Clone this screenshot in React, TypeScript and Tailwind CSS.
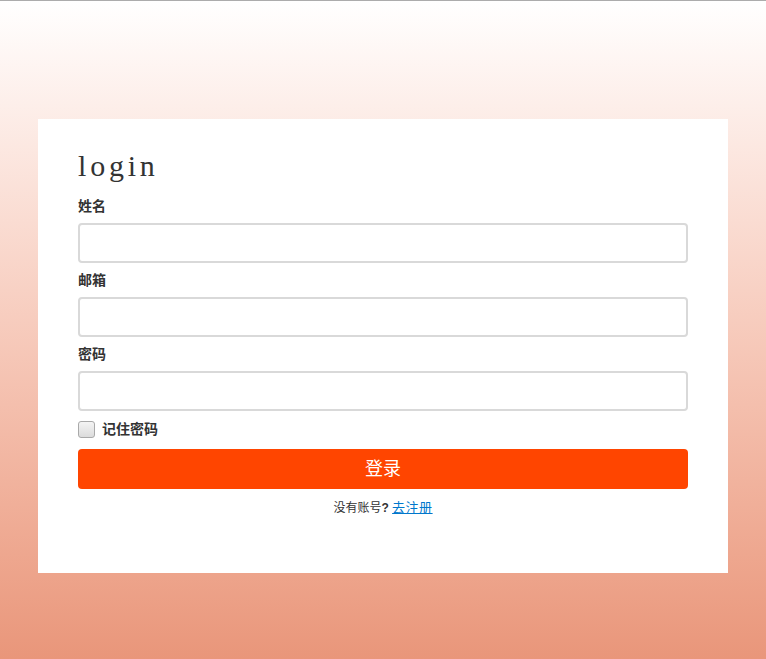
import React, { useState } from 'react';

const cjk = "font-['Liberation_Sans','Noto_Sans_CJK_SC',sans-serif]";

const Field: React.FC<{ label: string; type?: string }> = ({ label, type = 'text' }) => (
  <div>
    <label className="block h-[20px] leading-[20px] text-[14px] font-bold text-[#333] mb-[7px]">{label}</label>
    <input
      type={type}
      className="block w-full h-[40px] border-2 border-[#d9d9d9] rounded-[4px] px-2 text-[14px] outline-none bg-white mb-[7px]"
    />
  </div>
);

const App: React.FC = () => {
  const [remember, setRemember] = useState(false);

  return (
    <div className={`min-h-[659px] border-t border-[#acacac] bg-gradient-to-b from-white to-[#e9967a] pt-[118px] ${cjk}`}>
      <div className="w-[690px] mx-auto bg-white h-[454px] pt-[27px] px-[40px]">
        <h1 className="text-[30px] leading-[40px] tracking-[3.8px] text-[#333] font-['Liberation_Serif',serif] mb-[10px]">
          login
        </h1>
        <Field label="姓名" />
        <Field label="邮箱" />
        <Field label="密码" type="password" />
        <div className="flex items-center h-[18px] mt-[9px] mb-[11px]">
          <button
            type="button"
            onClick={() => setRemember(!remember)}
            className="w-[17px] h-[17px] rounded-[3px] border border-[#a9a9a9] bg-gradient-to-b from-[#f4f4f4] to-[#dcdcdc] flex items-center justify-center text-[12px] leading-none text-[#333]"
          >
            {remember ? '✓' : ''}
          </button>
          <span className="ml-[7px] text-[14px] font-bold text-[#333]">记住密码</span>
        </div>
        <button
          type="button"
          className="w-full h-[40px] rounded-[4px] bg-[#ff4500] text-white text-[18px]"
        >
          登录
        </button>
        <p className="mt-[10px] text-center text-[12px] leading-[18px] text-[#333]">
          没有账号<span className="font-bold">?</span> <a href="#" className="text-[13px] tracking-[0.5px] text-[#0077cc] underline">去注册</a>
        </p>
      </div>
    </div>
  );
};

export default App;
